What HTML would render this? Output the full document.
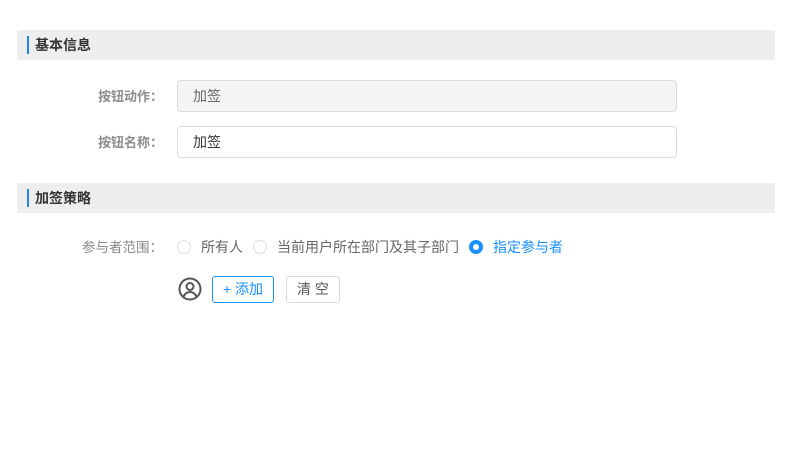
<!DOCTYPE html>
<html><head><meta charset="utf-8"><style>
body{margin:0;width:788px;height:466px;background:#fff;font-family:"Liberation Sans","Noto Sans CJK SC",sans-serif;position:relative;overflow:hidden}
.a{position:absolute}
.bar{left:17px;width:758px;height:30px;background:#eeeeee}
.bar i{position:absolute;left:10px;top:6px;width:2px;height:18px;background:#1f86e6}
.bar span{position:absolute;left:18px;top:0;line-height:30px;font-size:14px;font-weight:bold;color:#333}
.lab{width:163px;text-align:right;font-size:13px;font-weight:bold;color:#8c8c8c;left:0;line-height:18px}
.inp{left:177px;height:30px;border:1px solid #dcdcdc;border-radius:4px;font-size:14px;line-height:30px;padding-left:15px;box-sizing:content-box;width:483px;color:#333}
.rad{width:14px;height:14px;border:1px solid #dcdfe6;border-radius:50%;box-sizing:border-box}
.t{font-size:14px;color:#666;line-height:18px}
.btn{height:27px;box-sizing:border-box;border-radius:3px;font-size:14px;line-height:25px;text-align:center}
</style></head><body>
<div class="a bar" style="top:30px"><i></i><span>基本信息</span></div>
<div class="a lab" style="top:88px">按钮动作：</div>
<div class="a inp" style="top:80px;background:#f4f4f4;color:#666">加签</div>
<div class="a lab" style="top:134px">按钮名称：</div>
<div class="a inp" style="top:126px;background:#fff">加签</div>
<div class="a bar" style="top:183px"><i></i><span>加签策略</span></div>
<div class="a lab" style="top:239px;font-weight:normal;color:#888;font-size:13.5px">参与者范围：</div>
<div class="a rad" style="left:177px;top:240px"></div>
<div class="a t" style="left:201px;top:238px">所有人</div>
<div class="a rad" style="left:253px;top:240px"></div>
<div class="a t" style="left:277px;top:238px">当前用户所在部门及其子部门</div>
<div class="a rad" style="left:469px;top:240px;border:4px solid #1890ff;background:#fff"></div>
<div class="a t" style="left:493px;top:238px;color:#1890ff">指定参与者</div>
<svg class="a" style="left:178px;top:277px" width="24" height="24" viewBox="0 0 24 24"><circle cx="12" cy="12" r="10.5" fill="none" stroke="#555" stroke-width="2"/><circle cx="12" cy="9.5" r="3.5" fill="none" stroke="#555" stroke-width="2"/><path d="M5.5 19.5c1.5-3 4-4.5 6.5-4.5s5 1.5 6.5 4.5" fill="none" stroke="#555" stroke-width="2"/></svg>
<div class="a btn" style="left:212px;top:276px;width:62px;border:1px solid #1890ff;color:#1890ff">+ 添加</div>
<div class="a btn" style="left:286px;top:276px;width:54px;border:1px solid #dcdcdc;color:#555">清 空</div>
</body></html>
